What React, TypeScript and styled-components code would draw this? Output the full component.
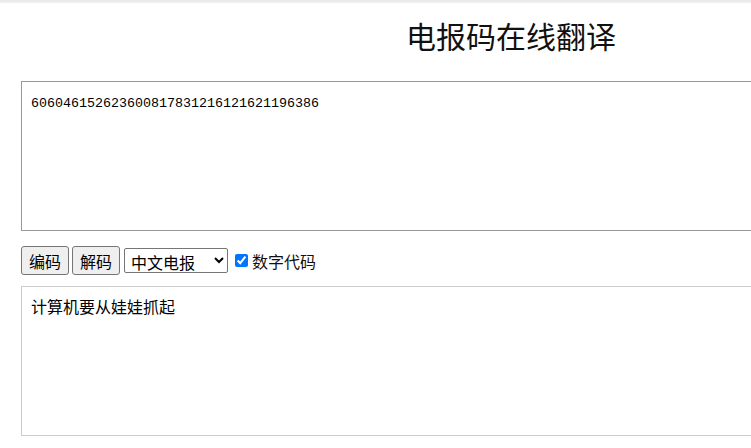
import React, { useState } from 'react';
import styled, { createGlobalStyle } from 'styled-components';

const GlobalStyle = createGlobalStyle`
  html, body {
    margin: 0;
    padding: 0;
    background: #fff;
    overflow-x: hidden;
    font-family: "Noto Sans CJK SC", "Noto Sans", sans-serif;
    color: #000;
  }
`;

const TopBar = styled.div`
  height: 3px;
  background: linear-gradient(#e6e6e6, #f2f2f2);
`;

const Wrapper = styled.main`
  width: 980px;
  padding: 0 0 0 21px;
`;

const Title = styled.h1`
  margin: 0;
  padding-top: 10px;
  height: 68px;
  text-align: center;
  font-size: 30px;
  font-weight: 400;
  line-height: 44px;
  color: #111;
`;

const Area = styled.textarea<{ $mono?: boolean; $border: string }>`
  display: block;
  box-sizing: border-box;
  width: 980px;
  height: 150px;
  margin: 0;
  padding: ${({ $mono }) => ($mono ? '13px 9px' : '6px 9px')};
  border: 1px solid ${({ $border }) => $border};
  resize: none;
  outline: none;
  font-family: ${({ $mono }) =>
    $mono ? '"Liberation Mono", monospace' : '"Noto Sans CJK SC", sans-serif'};
  font-size: ${({ $mono }) => ($mono ? '13.33px' : '16px')};
  line-height: ${({ $mono }) => ($mono ? '18px' : '26px')};
  color: #000;
`;

const Toolbar = styled.div`
  display: flex;
  align-items: center;
  height: 29px;
  margin: 15px 0 11px;
`;

const Button = styled.button`
  box-sizing: border-box;
  height: 29px;
  padding: 0 7px;
  margin-right: 3px;
  border: 1px solid #767676;
  border-radius: 3px;
  background: #efefef;
  font-family: "Noto Sans CJK SC", sans-serif;
  font-size: 16px;
  color: #000;
`;

const Select = styled.select`
  box-sizing: border-box;
  width: 104px;
  height: 25px;
  margin-left: 1px;
  padding: 0 2px;
  border: 1px solid #767676;
  border-radius: 2px;
  background: #fff;
  font-family: "Noto Sans CJK SC", sans-serif;
  font-size: 16px;
  color: #000;
`;

const CheckLabel = styled.label`
  display: flex;
  align-items: center;
  margin-left: 7px;
  font-size: 16px;
  color: #111;

  input {
    width: 13px;
    height: 13px;
    margin: 0 4px 0 0;
    accent-color: #0075ff;
  }
`;

export default function App() {
  const [code, setCode] = useState('606046152623600817831216121621196386');
  const [text, setText] = useState('计算机要从娃娃抓起');
  const [digits, setDigits] = useState(true);

  return (
    <>
      <GlobalStyle />
      <TopBar />
      <Wrapper>
        <Title>电报码在线翻译</Title>
        <Area $mono $border="#999" value={code} onChange={e => setCode(e.target.value)} />
        <Toolbar>
          <Button>编码</Button>
          <Button>解码</Button>
          <Select defaultValue="cn">
            <option value="cn">中文电报</option>
          </Select>
          <CheckLabel>
            <input type="checkbox" checked={digits} onChange={e => setDigits(e.target.checked)} />
            数字代码
          </CheckLabel>
        </Toolbar>
        <Area $border="#ccc" value={text} onChange={e => setText(e.target.value)} />
      </Wrapper>
    </>
  );
}
